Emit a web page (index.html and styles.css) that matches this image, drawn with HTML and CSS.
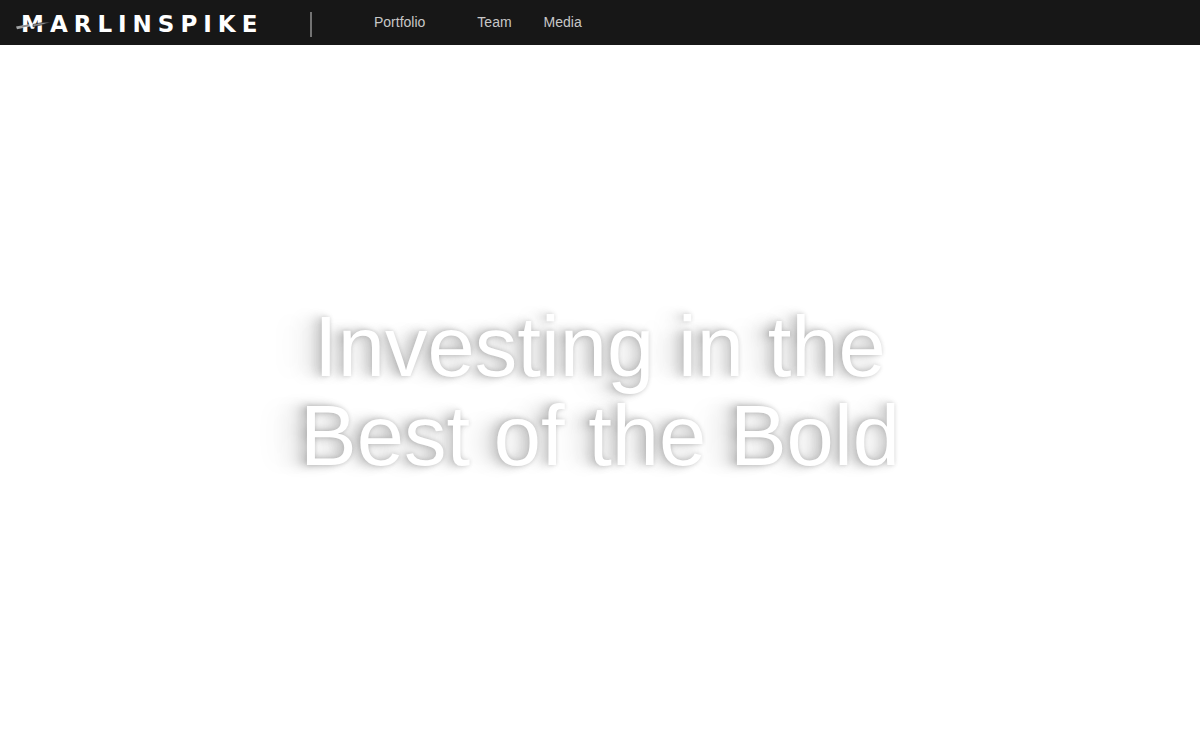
FILE: index.html
```html
<!DOCTYPE html>

<html lang="en">
<head>
    <meta charset="utf-8">
    <title>Marlinspike</title>
    <link rel="stylesheet" href="styles.css">
</head>
<body>
<header class="navbar">
    <a class="logo" href="#">
        <svg width="260" height="32" viewBox="0 0 260 32">
            <path d="M0 19.6 L14 17 L14 19.4 L1 22.2 Z" fill="#a0a2a3"/>
            <text class="logo-text" x="5" y="25">MARLINSPIKE</text>
            <path d="M6 18.6 L12 17.4 L12 19.4 L6 20.6 Z" fill="#8e8f90"/>
            <path d="M17 17.4 L27 15.4 L35 15 L27 17.6 L17 19.8 Z" fill="#8e8f90" stroke="#171717" stroke-width="0.6"/>
        </svg>
    </a>
    <nav class="menu">
        <a class="menu-wide" href="#">Portfolio</a>
        <a href="#">Team</a>
        <a href="#">Media</a>
    </nav>
</header>
<main class="hero">
    <h1 class="hero-title">Investing in the<br>Best of the Bold</h1>
</main>
</body>

</html>
```

FILE: styles.css
```css
body {
margin: 0;
min-height: 100vh;
display: flex;
flex-direction: column;
background-color: #fff;
font-family: "Liberation Sans", Arial, sans-serif;
}
.navbar {
display: flex;
align-items: center;
height: 45px;
padding-left: 16px;
background-color: #171717;
}
.logo svg {
display: block;
}
.logo-text {
font-family: "DejaVu Sans", sans-serif;
font-weight: bold;
font-size: 23px;
letter-spacing: 6px;
fill: #fff;
}
.menu {
display: flex;
align-items: center;
gap: 32px;
height: 25px;
margin-left: 34px;
margin-top: 4px;
padding-left: 62px;
border-left: 2px solid #737373;
}
.menu a {
color: #c8c8c8;
font-size: 14px;
line-height: 16px;
text-decoration: none;
padding-bottom: 6px;
}
.menu .menu-wide {
margin-right: 20px;
}
.hero {
flex: 1;
display: flex;
align-items: center;
justify-content: center;
padding-bottom: 14px;
}
.hero-title {
margin: 0;
color: #fff;
font-size: 85px;
font-weight: normal;
line-height: 89px;
text-align: center;
text-shadow: 0 0 4px rgba(0, 0, 0, 0.14), -4px 0 8px rgba(0, 0, 0, 0.18), -10px 0 12px rgba(0, 0, 0, 0.12), -20px 0 16px rgba(0, 0, 0, 0.08), -36px 0 20px rgba(0, 0, 0, 0.03);
}
```
